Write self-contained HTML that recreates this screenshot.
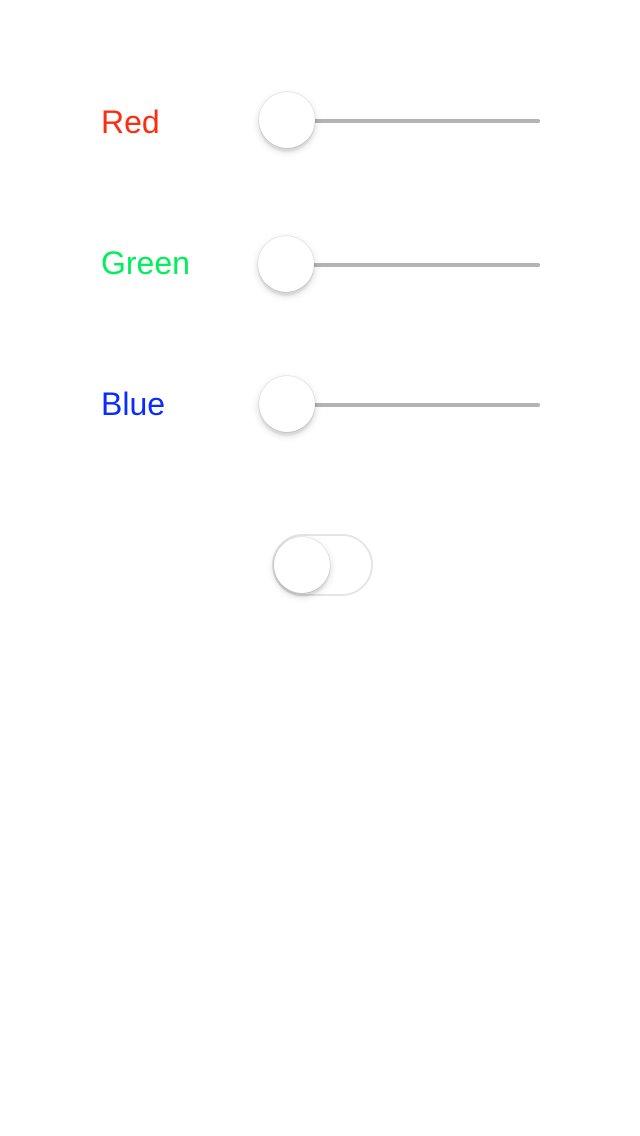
<!DOCTYPE html>
<html><head><meta charset="utf-8"><style>
html,body{margin:0;padding:0;width:640px;height:1136px;background:#fff;overflow:hidden;font-family:"Liberation Sans",sans-serif;}
.l{position:absolute;left:101px;font-size:32px;line-height:1;}
.t{position:absolute;left:300px;width:240px;height:4px;background:#b3b3b3;border-radius:2px;}
.k{position:absolute;width:56px;height:56px;border-radius:50%;background:#fff;box-shadow:0 0 0 0.5px rgba(0,0,0,0.12),0 3px 8px rgba(0,0,0,0.18),0 4px 1px rgba(0,0,0,0.05);}
.sw{position:absolute;left:272px;top:534px;width:97px;height:58px;border-radius:31px;border:2px solid #e5e5e5;background:#fff;}
</style></head><body>
<div class="l" style="top:106px;color:#ff2d0f">Red</div>
<div class="t" style="top:119px"></div>
<div class="k" style="left:259px;top:92px"></div>

<div class="l" style="top:247px;color:#00f05c">Green</div>
<div class="t" style="top:263px"></div>
<div class="k" style="left:258px;top:236px"></div>

<div class="l" style="top:388px;color:#0a2dff">Blue</div>
<div class="t" style="top:403px"></div>
<div class="k" style="left:259px;top:376px"></div>

<div class="sw"></div>
<div class="k" style="left:274px;top:537px"></div>
</body></html>
